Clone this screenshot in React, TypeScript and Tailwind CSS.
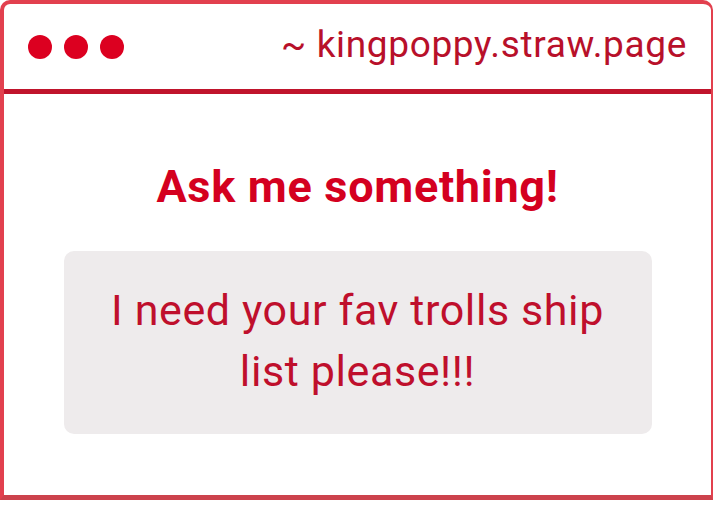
import React from "react";

const App = () => {
  return (
    <div
      className="w-[713px] h-[506px] bg-white overflow-hidden"
      style={{ fontFamily: "Roboto, 'Liberation Sans', sans-serif" }}
    >
      <div className="w-[713px] h-[500px] flex flex-col border-l-4 border-t-4 border-r-2 border-b-[5px] border-l-[#e2404e] border-t-[#e2404e] border-r-[#e2404e] border-b-[#cc424c] rounded-tl-[10px] rounded-tr-[10px]">
        {/* Header */}
        <div className="h-[90px] shrink-0 flex items-center justify-between pl-6 pr-6 border-b-[5px] border-[#c0142c]">
          <div className="flex items-center gap-3">
            <span className="w-6 h-6 rounded-full bg-[#dc0020]" />
            <span className="w-6 h-6 rounded-full bg-[#dc0020]" />
            <span className="w-6 h-6 rounded-full bg-[#dc0020]" />
          </div>
          <span className="text-[37px] leading-none tracking-[0.65px] mb-[5px] text-[#b8102a]">
            ~ kingpoppy.straw.page
          </span>
        </div>

        {/* Body */}
        <div className="flex-1 flex flex-col items-center pt-[67px]">
          <h1 className="text-[45px] leading-[52px] font-bold tracking-[0.7px] text-[#d4001f]">
            Ask me something!
          </h1>
          <div className="mt-[38px] w-[588px] h-[183px] rounded-[10px] bg-[#eeebec] flex items-start justify-center pt-[29px] px-10">
            <p className="text-[43px] leading-[61px] tracking-[0.6px] text-center text-[#bf0f2c]">
              I need your fav trolls ship list please!!!
            </p>
          </div>
        </div>
      </div>
    </div>
  );
};

export default App;
